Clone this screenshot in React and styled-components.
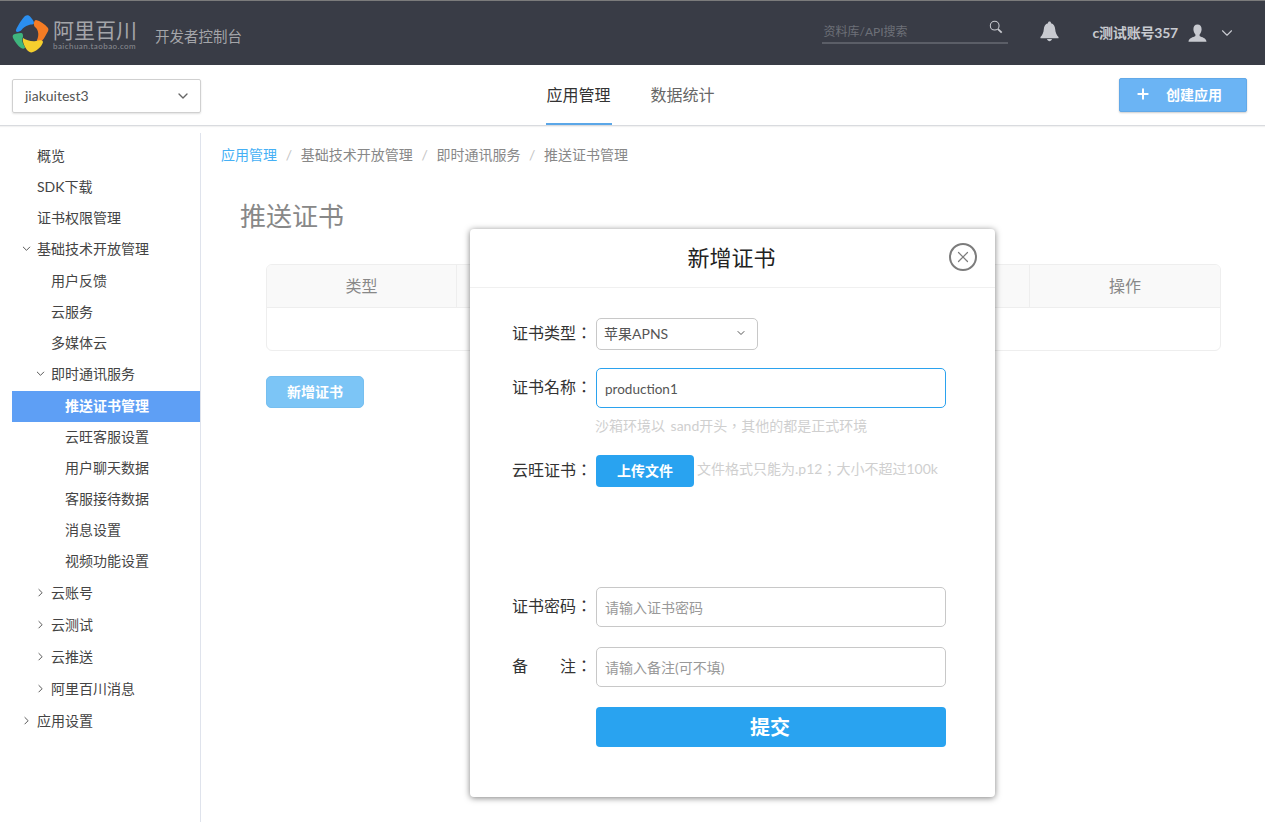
import React from "react";
import styled, { createGlobalStyle } from "styled-components";
import { ChevronDown, ChevronRight, Plus, X } from "lucide-react";

const FONT = `Lato, "Noto Sans CJK SC", sans-serif`;
// the TC cut centres its full-width colon and comma, as the page does
const FONT_TC = `Lato, "Noto Sans CJK TC", sans-serif`;

const GlobalStyle = createGlobalStyle`
  html, body {
    margin: 0;
    padding: 0;
    background: #fff;
    font-family: ${FONT};
    overflow: hidden;
  }
  * { box-sizing: border-box; }
`;

const Page = styled.div`
  position: relative;
  width: 100%;
  height: 822px;
  overflow: hidden;
`;

const Header = styled.header`
  height: 65px;
  background: #393c46;
  border-top: 1px solid #7b7b7b;
  display: flex;
  align-items: center;
  padding: 0 29px 0 12px;
`;

const Brand = styled.div`
  display: flex;
  align-items: center;
  flex: 1;
`;

const LogoMark = styled.svg`
  margin-top: 2px;
`;

const LogoText = styled.div`
  display: flex;
  flex-direction: column;
  margin: 3px 0 0 3px;
  color: #a4a5a9;
`;

const LogoName = styled.span`
  font-size: 21px;
  line-height: 24px;
`;

const LogoUrl = styled.span`
  font-size: 8px;
  line-height: 9px;
  letter-spacing: 0.45px;
  color: #8b8d93;
`;

const ConsoleTitle = styled.span`
  font-size: 14.5px;
  color: #a4a5a9;
  margin: 5px 0 0 18px;
`;

const SearchBox = styled.div`
  width: 186px;
  height: 29px;
  display: flex;
  align-items: center;
  justify-content: space-between;
  padding: 4px 5px 0 1px;
  border-bottom: 2px solid #5b5e67;
  margin: 0 32px 8px 0;
  font-size: 12px;
  color: #6d7078;
`;

const SearchGlyph = styled.svg`
  margin-top: -6px;
`;

const BellGlyph = styled.svg`
  margin-top: -4px;
`;

const UserName = styled.span`
  font-size: 14px;
  font-weight: 700;
  letter-spacing: -0.2px;
  color: #c8cad0;
  margin-left: 33px;
  padding-bottom: 3px;
`;

const UserIcon = styled.svg`
  margin-left: 10px;
`;

const HeaderChevron = styled(ChevronDown)`
  margin-left: 11px;
  color: #c8cad0;
`;

const SubNav = styled.div`
  height: 61px;
  display: flex;
  align-items: center;
  border-bottom: 1px solid #d9dbdf;
  box-shadow: 0 1px 1px rgba(0, 0, 0, 0.05);
  padding: 0 18px 0 12px;
`;

const AppSelect = styled.div`
  width: 189px;
  height: 34px;
  margin-top: 1px;
  display: flex;
  align-items: center;
  justify-content: space-between;
  padding: 0 9px 0 12px;
  border: 1px solid #d0d0d0;
  border-radius: 2px;
  box-shadow: 0 1px 2px rgba(0, 0, 0, 0.12);
  font-size: 14px;
  color: #555;
`;

const Tabs = styled.nav`
  flex: 1;
  display: flex;
  justify-content: center;
  gap: 38px;
  height: 100%;
  padding-right: 59px;
`;

const Tab = styled.a`
  display: flex;
  align-items: center;
  width: 66px;
  justify-content: center;
  font-size: 16px;
  color: ${({ $active }) => ($active ? "#333" : "#666")};
  border-bottom: 2px solid ${({ $active }) => ($active ? "#5ba7e8" : "transparent")};
`;

const CreateButton = styled.button`
  width: 128px;
  height: 34px;
  display: flex;
  align-items: center;
  padding: 0 0 2px 15px;
  gap: 15px;
  background: #6bb4f4;
  border: 1px solid #62a9e8;
  border-radius: 2px;
  box-shadow: 0 1px 2px rgba(0, 0, 0, 0.2);
  color: #fff;
  font-family: ${FONT};
  font-size: 14px;
  font-weight: 700;
`;

const Body = styled.div`
  display: flex;
  padding-top: 7px;
`;

const Sidebar = styled.aside`
  width: 201px;
  height: 690px;
  padding: 8px 0 0 12px;
  border-right: 1px solid #dfe3ec;
  flex-shrink: 0;
`;

const MenuRow = styled.div`
  position: relative;
  height: ${({ $tall }) => ($tall ? 32 : 31)}px;
  margin-top: ${({ $gap }) => ($gap ? 1 : 0)}px;
  display: flex;
  align-items: center;
  padding: 0 0 4px ${({ $level }) => 25 + $level * 14}px;
  font-size: 14px;
  color: ${({ $active }) => ($active ? "#fff" : "#444")};
  font-weight: ${({ $active }) => ($active ? 700 : 400)};
  background: ${({ $active }) => ($active ? "#5e9ff5" : "transparent")};
`;

const MenuArrow = styled.span`
  position: absolute;
  left: ${({ $level }) => 8 + $level * 14}px;
  top: 50%;
  transform: translateY(-60%);
  display: flex;
  color: #333;
`;

const Main = styled.main`
  flex: 1;
  padding: 0 44px 0 20px;
`;

const Crumbs = styled.div`
  height: 30px;
  display: flex;
  align-items: center;
  margin-top: 6px;
  font-size: 14px;
  color: #888;
`;

const Crumb = styled.span`
  color: ${({ $link }) => ($link ? "#45b0f5" : "#888")};
`;

const CrumbSep = styled.span`
  margin: 0 8.7px;
  color: #c4c4c4;
`;

const PageTitle = styled.h1`
  margin: 27px 0 0 19px;
  height: 40px;
  font-size: 26px;
  line-height: 40px;
  font-weight: 400;
  color: #888;
`;

const Table = styled.div`
  margin: 28px 0 0 45px;
  border: 1px solid #eee;
  border-radius: 6px;
  overflow: hidden;
`;

const TableHead = styled.div`
  display: grid;
  grid-template-columns: 189px repeat(3, 1fr) 191px;
  height: 43px;
  background: #f9f9f9;
  border-bottom: 1px solid #eee;
`;

const HeadCell = styled.div`
  display: flex;
  align-items: center;
  justify-content: center;
  padding-bottom: 2px;
  font-size: 16px;
  color: #888;
  & + & { border-left: 1px solid #eee; }
`;

const TableBody = styled.div`
  height: 42px;
`;

const AddButton = styled.button`
  display: block;
  width: 98px;
  height: 32px;
  margin: 25px 0 0 45px;
  padding: 0 0 2px;
  background: #7cc5f6;
  border: 1px solid #76bff0;
  border-radius: 5px;
  color: #fff;
  font-family: ${FONT};
  font-size: 14px;
  font-weight: 700;
`;

const Modal = styled.div`
  position: absolute;
  left: 470px;
  top: 229px;
  width: 525px;
  height: 568px;
  background: #fff;
  border-radius: 4px;
  box-shadow: 0 1px 6px rgba(0, 0, 0, 0.5);
`;

const ModalHead = styled.div`
  position: relative;
  height: 59px;
  display: flex;
  align-items: center;
  justify-content: center;
  border-bottom: 1px solid #f0f0f0;
  font-size: 22px;
  color: #222;
  padding: 0 2px 4px 0;
`;

const CloseButton = styled.div`
  position: absolute;
  right: 18px;
  top: 14px;
  width: 28px;
  height: 28px;
  display: flex;
  align-items: center;
  justify-content: center;
  border: 2px solid #7c7c7c;
  border-radius: 50%;
  color: #7c7c7c;
`;

const ModalBody = styled.div`
  padding: 30px 49px 0 42px;
`;

const FormRow = styled.div`
  display: flex;
  align-items: center;
  margin-top: ${({ $mt }) => $mt || 0}px;
`;

const Label = styled.label`
  width: 84px;
  flex-shrink: 0;
  display: flex;
  justify-content: space-between;
  font-family: ${FONT_TC};
  font-size: 16px;
  color: #333;
  padding-right: 4px;
  margin-top: -5px;
`;

const TypeSelect = styled.div`
  width: 162px;
  height: 32px;
  display: flex;
  align-items: center;
  justify-content: space-between;
  padding: 0 10px 2px 7px;
  border: 1px solid #c8c8c8;
  border-radius: 5px;
  font-size: 14px;
  color: #555;
`;

const TextInput = styled.input`
  flex: 1;
  min-width: 0;
  height: 40px;
  padding: 2px 8px 0;
  border: 1px solid ${({ $focus }) => ($focus ? "#2ba2ee" : "#c8c8c8")};
  border-radius: 5px;
  outline: none;
  font-family: ${FONT};
  font-size: 13.5px;
  color: #555;
  &::placeholder { color: #999; opacity: 1; font-size: 14px; }
`;

const Hint = styled.div`
  font-family: ${FONT_TC};
  font-size: 14px;
  line-height: 20px;
  word-spacing: 2px;
  color: #cfcfcf;
  margin-left: ${({ $indent }) => $indent || 0}px;
  margin-top: ${({ $mt }) => $mt || 0}px;
`;

const UploadButton = styled.button`
  width: 98px;
  height: 32px;
  padding: 0 0 2px;
  border: none;
  border-radius: 4px;
  background: #29a3f0;
  color: #fff;
  font-family: ${FONT};
  font-size: 14px;
  font-weight: 700;
  flex-shrink: 0;
`;

const SubmitButton = styled.button`
  display: block;
  width: 350px;
  height: 40px;
  margin: 20px 0 0 84px;
  padding: 0 2px 1px 0;
  border: none;
  border-radius: 4px;
  background: #29a3f0;
  color: #fff;
  font-family: ${FONT};
  font-size: 20px;
  font-weight: 700;
`;

const menu = [
  { text: "概览", level: 0 },
  { text: "SDK下载", level: 0 },
  { text: "证书权限管理", level: 0 },
  { text: "基础技术开放管理", level: 0, arrow: "down" },
  { text: "用户反馈", level: 1, gap: true },
  { text: "云服务", level: 1 },
  { text: "多媒体云", level: 1 },
  { text: "即时通讯服务", level: 1, arrow: "down" },
  { text: "推送证书管理", level: 2, gap: true, active: true },
  { text: "云旺客服设置", level: 2 },
  { text: "用户聊天数据", level: 2 },
  { text: "客服接待数据", level: 2 },
  { text: "消息设置", level: 2 },
  { text: "视频功能设置", level: 2 },
  { text: "云账号", level: 1, arrow: "right", gap: true, tall: true },
  { text: "云测试", level: 1, arrow: "right", tall: true },
  { text: "云推送", level: 1, arrow: "right", tall: true },
  { text: "阿里百川消息", level: 1, arrow: "right", tall: true },
  { text: "应用设置", level: 0, arrow: "right", tall: true },
];

const Logo = () => (
  <LogoMark width="38" height="40" viewBox="0 0 38 40">
    <path d="M4 16 C6 11 10 5 13 2 C15 0.5 17 1 18.5 3 C20 5 22 7 22 9 C22 11 19 10 17 11 C13 12 11 14 9.5 16 C8 18 3 19 4 16 Z" fill="#2b8ff0" />
    <path d="M24 6 C28 7 33 10 36 14 C37 16 36 17 35 19 C33 23 31 26 28 29 C26 30 25 28 25 26 C27 22 27 16 23 13 C21 11 22 6 24 6 Z" fill="#f57c24" />
    <path d="M11 24 C14 26 20 28 24 27 C27 26 31 26 31 28 C30 32 26 36 21 38 C19 39 17 38 15 36 C13 33 10 28 11 24 Z" fill="#f5cf2e" />
    <path d="M1 21 C2 20 5 19 9 19 C11 19 11 21 11 23 C9 26 11 30 13 33 C13 35 11 35 9 34 C6 32 3 28 1 24 C0.5 23 0.5 22 1 21 Z" fill="#3fb57d" />
  </LogoMark>
);

const SearchIcon = () => (
  <SearchGlyph width="14" height="14" viewBox="0 0 16 16" fill="none">
    <circle cx="6.5" cy="6.5" r="5" stroke="#c8cad0" strokeWidth="1.2" />
    <path d="M10.3 10.3 L14.5 14.5" stroke="#c8cad0" strokeWidth="2" />
  </SearchGlyph>
);

const BellIcon = () => (
  <BellGlyph width="19" height="21" viewBox="0 0 20 22">
    <path d="M10 0.5 C11 0.5 11.6 1.2 11.6 2.2 C14.6 3 15.8 5.6 16 8.5 C16.2 12 17.4 14.4 19.5 16.8 L19.5 18 L0.5 18 L0.5 16.8 C2.6 14.4 3.8 12 4 8.5 C4.2 5.6 5.4 3 8.4 2.2 C8.4 1.2 9 0.5 10 0.5 Z" fill="#c8cad0" />
    <path d="M7.4 19 H12.6 C12.2 20.4 11.2 21.2 10 21.2 C8.8 21.2 7.8 20.4 7.4 19 Z" fill="#c8cad0" />
  </BellGlyph>
);

const App = () => (
  <Page>
    <GlobalStyle />
    <Header>
      <Brand>
        <Logo />
        <LogoText>
          <LogoName>阿里百川</LogoName>
          <LogoUrl>baichuan.taobao.com</LogoUrl>
        </LogoText>
        <ConsoleTitle>开发者控制台</ConsoleTitle>
      </Brand>
      <SearchBox>
        资料库/API搜索
        <SearchIcon />
      </SearchBox>
      <BellIcon />
      <UserName>c测试账号357</UserName>
      <UserIcon width="19" height="19" viewBox="0 0 19 19">
        <path d="M9.5 0.5 C12.2 0.5 13.6 2.6 13.6 5.2 C13.6 7.4 12.6 9.4 11.6 10.4 L11.6 12 C13.6 13.2 18.5 14 18.5 17.8 L0.5 17.8 C0.5 14 5.4 13.2 7.4 12 L7.4 10.4 C6.4 9.4 5.4 7.4 5.4 5.2 C5.4 2.6 6.8 0.5 9.5 0.5 Z" fill="#c8cad0" />
      </UserIcon>
      <HeaderChevron size={18} strokeWidth={1.5} />
    </Header>
    <SubNav>
      <AppSelect>
        jiakuitest3
        <ChevronDown size={16} strokeWidth={2} color="#666" />
      </AppSelect>
      <Tabs>
        <Tab $active>应用管理</Tab>
        <Tab>数据统计</Tab>
      </Tabs>
      <CreateButton>
        <Plus size={16} strokeWidth={3} />
        创建应用
      </CreateButton>
    </SubNav>
    <Body>
      <Sidebar>
        {menu.map((item) => (
          <MenuRow
            key={item.text}
            $level={item.level}
            $gap={item.gap}
            $tall={item.tall}
            $active={item.active}
          >
            {item.arrow && (
              <MenuArrow $level={item.level}>
                {item.arrow === "down" ? (
                  <ChevronDown size={13} strokeWidth={1.5} />
                ) : (
                  <ChevronRight size={13} strokeWidth={1.5} />
                )}
              </MenuArrow>
            )}
            {item.text}
          </MenuRow>
        ))}
      </Sidebar>
      <Main>
        <Crumbs>
          <Crumb $link>应用管理</Crumb>
          <CrumbSep>/</CrumbSep>
          <Crumb>基础技术开放管理</Crumb>
          <CrumbSep>/</CrumbSep>
          <Crumb>即时通讯服务</Crumb>
          <CrumbSep>/</CrumbSep>
          <Crumb>推送证书管理</Crumb>
        </Crumbs>
        <PageTitle>推送证书</PageTitle>
        <Table>
          <TableHead>
            <HeadCell>类型</HeadCell>
            <HeadCell>名称</HeadCell>
            <HeadCell>状态</HeadCell>
            <HeadCell>备注</HeadCell>
            <HeadCell>操作</HeadCell>
          </TableHead>
          <TableBody />
        </Table>
        <AddButton>新增证书</AddButton>
      </Main>
    </Body>
    <Modal>
      <ModalHead>
        新增证书
        <CloseButton>
          <X size={18} strokeWidth={1.6} />
        </CloseButton>
      </ModalHead>
      <ModalBody>
        <FormRow>
          <Label>证书类型：</Label>
          <TypeSelect>
            苹果APNS
            <ChevronDown size={12} strokeWidth={2} color="#555" />
          </TypeSelect>
        </FormRow>
        <FormRow $mt={18}>
          <Label>证书名称：</Label>
          <TextInput $focus defaultValue="production1" />
        </FormRow>
        <Hint $indent={83} $mt={8}>沙箱环境以 sand开头，其他的都是正式环境</Hint>
        <FormRow $mt={19}>
          <Label>云旺证书：</Label>
          <UploadButton>上传文件</UploadButton>
          <Hint $indent={3} $mt={-4}>文件格式只能为.p12；大小不超过100k</Hint>
        </FormRow>
        <FormRow $mt={100}>
          <Label>证书密码：</Label>
          <TextInput placeholder="请输入证书密码" />
        </FormRow>
        <FormRow $mt={20}>
          <Label>
            <span>备</span>
            <span>注：</span>
          </Label>
          <TextInput placeholder="请输入备注(可不填)" />
        </FormRow>
        <SubmitButton>提交</SubmitButton>
      </ModalBody>
    </Modal>
  </Page>
);

export default App;
